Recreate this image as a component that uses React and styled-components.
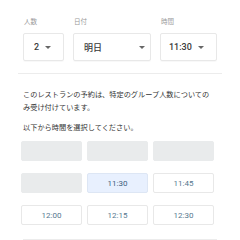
import React from "react"
import styled, { createGlobalStyle } from "styled-components"

const GlobalStyle = createGlobalStyle`
  body {
    margin: 0;
    background: #fff;
    font-family: "Noto Sans CJK JP", "Noto Sans", sans-serif;
  }
`

const Page = styled.div`
  width: 240px;
  height: 240px;
  overflow: hidden;
  padding: 17px 18px 0;
  box-sizing: border-box;
`

const FieldRow = styled.div`
  display: flex;
  gap: 9px;
  padding: 0 5px;
`

const Field = styled.div`
  display: flex;
  flex-direction: column;
  gap: 8px;
`

const Label = styled.span`
  font-size: 6.5px;
  line-height: 8px;
  color: #999;
  padding-left: 1px;
`

const Select = styled.div`
  box-sizing: border-box;
  width: ${(p) => p.$w}px;
  height: 28px;
  display: flex;
  align-items: center;
  justify-content: space-between;
  padding: 0 ${(p) => p.$pr}px 0 ${(p) => p.$pl}px;
  border: 1px solid #e8e8e8;
  border-radius: 2px;
  box-shadow: 0 1px 1px rgba(0, 0, 0, 0.03);
`

const Value = styled.span`
  font-family: Roboto, "Noto Sans CJK JP", sans-serif;
  font-size: 9px;
  font-weight: 500;
  color: #3a3a3a;
`

const Arrow = styled.span`
  width: 0;
  height: 0;
  border-left: 3px solid transparent;
  border-right: 3px solid transparent;
  border-top: 3px solid #666;
`

const Divider = styled.hr`
  border: 0;
  height: 1px;
  background: #ececec;
  margin: ${(p) => p.$m};
`

const Text = styled.p`
  margin: 0 0 ${(p) => p.$mb}px;
  padding: 0 5px;
  max-width: 190px;
  font-size: 7.2px;
  line-height: 13px;
  color: #333;
`

const SlotGrid = styled.div`
  display: grid;
  grid-template-columns: repeat(3, 61px);
  grid-auto-rows: 20px;
  column-gap: 5px;
  row-gap: 12px;
  padding-left: 3px;
  margin-top: 7px;
`

const Slot = styled.div`
  box-sizing: border-box;
  display: flex;
  align-items: center;
  justify-content: center;
  border-radius: 2px;
  font-family: Roboto, sans-serif;
  font-size: 8px;
  color: ${(p) => (p.$active ? "#40607f" : "#56788f")};
  background: ${(p) => (p.$empty ? "#e9ebec" : p.$active ? "#e8f0fe" : "#fff")};
  border: 1px solid
    ${(p) => (p.$empty ? "#e9ebec" : p.$active ? "#dde6f4" : "#e8e8e8")};
`

const slots = [null, null, null, null, "11:30", "11:45", "12:00", "12:15", "12:30"]

const App = () => {
  return (
    <Page>
      <GlobalStyle />
      <FieldRow>
        <Field>
          <Label>人数</Label>
          <Select $w={41} $pl={10} $pr={12}>
            <Value>2</Value>
            <Arrow />
          </Select>
        </Field>
        <Field>
          <Label>日付</Label>
          <Select $w={78} $pl={10} $pr={5}>
            <Value>明日</Value>
            <Arrow />
          </Select>
        </Field>
        <Field>
          <Label>時間</Label>
          <Select $w={57} $pl={8} $pr={12}>
            <Value>11:30</Value>
            <Arrow />
          </Select>
        </Field>
      </FieldRow>
      <Divider $m="12px 0 14px" />
      <Text $mb={7}>
        このレストランの予約は、特定のグループ人数についてのみ受け付けています。
      </Text>
      <Text $mb={0}>以下から時間を選択してください。</Text>
      <SlotGrid>
        {slots.map((t, i) => (
          <Slot key={i} $empty={!t} $active={t === "11:30"}>
            {t}
          </Slot>
        ))}
      </SlotGrid>
      <Divider $m="14px 5px 0" />
    </Page>
  )
}

export default App
